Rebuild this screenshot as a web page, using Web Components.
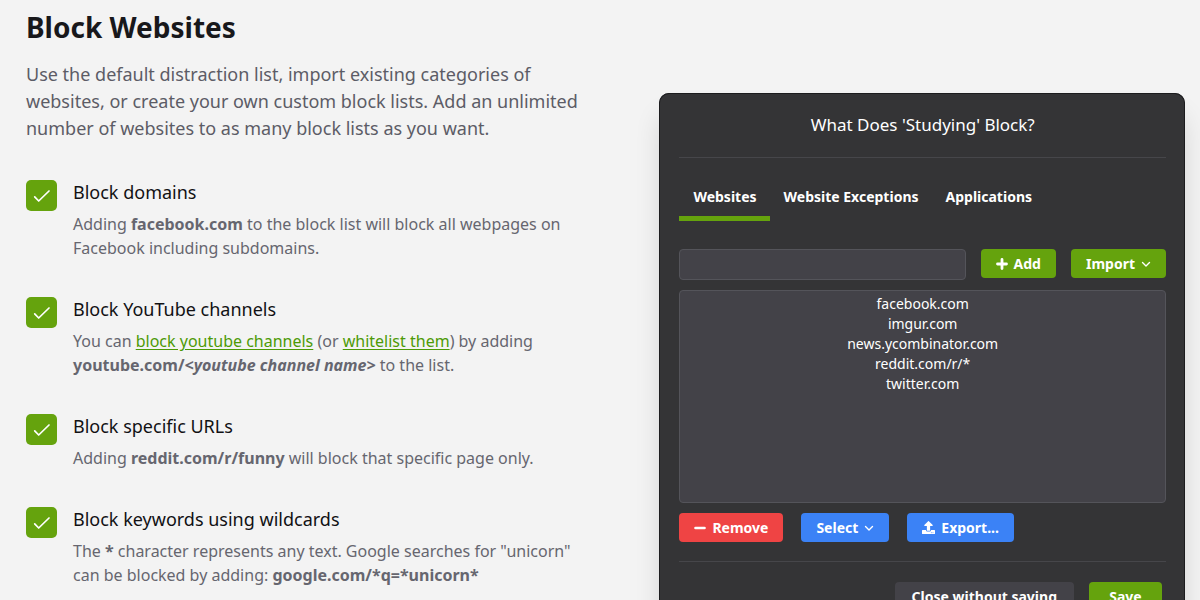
<!DOCTYPE html>
<html lang="en">
<head>
<meta charset="utf-8">
<meta name="viewport" content="width=device-width, initial-scale=1">
<title>Block Websites</title>
<style>
  body { margin: 0; background: #f3f3f3; font-family: "Noto Sans", "Open Sans", sans-serif; color: #18181b; }
</style>
</head>
<body>
<feature-section>
  <feature-intro slot="copy">
    <span slot="title">Block Websites</span>
    Use the default distraction list, import existing categories of websites, or create your own custom block lists. Add an unlimited number of websites to as many block lists as you want.
  </feature-intro>
  <feature-item slot="copy">
    <span slot="title">Block domains</span>
    Adding <b>facebook.com</b> to the block list will block all webpages on Facebook including subdomains.
  </feature-item>
  <feature-item slot="copy">
    <span slot="title">Block YouTube channels</span>
    You can <text-link href="#channels">block youtube channels</text-link> (or <text-link href="#whitelist">whitelist them</text-link>) by adding <b>youtube.com/<i>&lt;youtube channel name&gt;</i></b> to the list.
  </feature-item>
  <feature-item slot="copy">
    <span slot="title">Block specific URLs</span>
    Adding <b>reddit.com/r/funny</b> will block that specific page only.
  </feature-item>
  <feature-item slot="copy">
    <span slot="title">Block keywords using wildcards</span>
    The <b>*</b> character represents any text. Google searches for "unicorn" can be blocked by adding: <b>google.com/*q=*unicorn*</b>
  </feature-item>
  <block-dialog slot="demo"></block-dialog>
</feature-section>

<script>
const define = (name, html) => {
  const template = document.createElement('template');
  template.innerHTML = html;
  customElements.define(name, class extends HTMLElement {
    constructor() {
      super();
      this.attachShadow({ mode: 'open' }).append(template.content.cloneNode(true));
    }
    connectedCallback() {
      const link = this.shadowRoot.querySelector('a');
      if (link) link.href = this.getAttribute('href') || '#';
    }
  });
};

define('feature-section', `
<style>
  :host { display: block; }
  main { display: grid; grid-template-columns: 13fr 12fr; gap: 64px; padding: 7px 15px 24px 26px; align-items: start; }
  .demo { padding-top: 86px; }
</style>
<main>
  <div><slot name="copy"></slot></div>
  <div class="demo"><slot name="demo"></slot></div>
</main>`);

define('feature-intro', `
<style>
  :host { display: block; margin-bottom: 38px; }
  h1 { margin: 0 0 14px; font-size: 28px; line-height: 40px; font-weight: 700; }
  p { margin: 0; font-size: 18px; line-height: 27px; color: #5c5c66; }
</style>
<h1><slot name="title"></slot></h1>
<p><slot></slot></p>`);

define('feature-item', `
<style>
  :host { display: grid; grid-template-columns: 31px 1fr; column-gap: 16px; margin-bottom: 37px; }
  svg { display: block; width: 31px; height: 31px; border-radius: 5px; background: #65a30d; }
  h2 { margin: 0 0 7px; font-size: 18px; line-height: 25px; font-weight: 400; color: #111113; }
  p { margin: 0; font-size: 16px; line-height: 24px; color: #66666f; }
</style>
<svg viewBox="0 0 31 31" aria-hidden="true"><path d="M8.7 16.800l4 4.200L23 11" fill="none" stroke="#fff" stroke-width="1.700" stroke-linecap="round" stroke-linejoin="round"/></svg>
<div>
  <h2><slot name="title"></slot></h2>
  <p><slot></slot></p>
</div>`);

define('text-link', `
<style>
  :host { display: inline; }
  a { color: #4d9a06; text-decoration: underline; text-underline-offset: 2px; }
</style><a><slot></slot></a>`);

const icons = {
  plus: '<svg width="12" height="12" viewBox="0 0 12 12"><path d="M6 1.500v9M1.500 6h9" stroke="#fff" stroke-width="2.800" stroke-linecap="round"/></svg>',
  minus: '<svg width="12" height="12" viewBox="0 0 12 12"><path d="M1.500 6h9" stroke="#fff" stroke-width="2.600" stroke-linecap="round"/></svg>',
  chevron: '<svg width="10" height="10" viewBox="0 0 10 10"><path d="M1.500 3.500L5 7l3.500-3.500" fill="none" stroke="#fff" stroke-width="1.400" stroke-linecap="round" stroke-linejoin="round"/></svg>',
  upload: '<svg width="13" height="13" viewBox="0 0 512 512"><path fill="#fff" d="M296 384h-80c-13.300 0-24-10.700-24-24V192h-87.700c-17.800 0-26.700-21.500-14.100-34.100L242.300 5.700c7.500-7.500 19.800-7.500 27.300 0l152.200 152.200c12.600 12.600 3.700 34.100-14.100 34.100H320v168c0 13.300-10.700 24-24 24zm216-8v112c0 13.300-10.700 24-24 24H24c-13.300 0-24-10.700-24-24V376c0-13.300 10.700-24 24-24h136v8c0 30.900 25.100 56 56 56h80c30.900 0 56-25.100 56-56v-8h136c13.300 0 24 10.700 24 24zm-124 88c0-11-9-20-20-20s-20 9-20 20 9 20 20 20 20-9 20-20zm64 0c0-11-9-20-20-20s-20 9-20 20 9 20 20 20 20-9 20-20z"/></svg>'
};

customElements.define('ui-button', class extends HTMLElement {
  constructor() {
    super();
    const lead = icons[this.getAttribute('icon')] || '';
    const menu = this.hasAttribute('menu');
    this.attachShadow({ mode: 'open' }).innerHTML = `
<style>
  :host { display: block; flex: none; --fill: #65a30d; }
  :host([tone="danger"]) { --fill: #ef4444; }
  :host([tone="info"]) { --fill: #3b82f6; }
  :host([tone="muted"]) { --fill: #434248; }
  button { display: flex; align-items: center; justify-content: center; gap: 6px; width: 100%; height: 29px; padding: 0 15px; border: 0; border-radius: 4px; background: var(--fill); color: #fff; font: 700 14px/20px "Noto Sans", "Open Sans", sans-serif; white-space: nowrap; }
  :host([size="wide"]) button { min-width: 73px; padding: 0 17px; }
  svg { display: block; flex: none; }
</style>
<button type="button" ${menu ? 'aria-haspopup="menu"' : ''}>${lead}<slot></slot>${menu ? icons.chevron : ''}</button>`;
  }
});

define('tab-bar', `
<style>
  :host { display: flex; }
  button { margin: 0; padding: 0 13px 9px 14px; border: 0; border-bottom: 5px solid transparent; background: none; color: #fff; font: 700 14px/20px "Noto Sans", "Open Sans", sans-serif; }
  button[aria-selected="true"] { border-color: #65a30d; }
</style>
<button role="tab" type="button" aria-selected="true">Websites</button>
<button role="tab" type="button" aria-selected="false">Website Exceptions</button>
<button role="tab" type="button" aria-selected="false">Applications</button>`);

define('block-dialog', `
<style>
  :host { display: block; box-sizing: border-box; padding: 20px 19px 20px 20px; border-radius: 10px; background: #343436; color: #fff; box-shadow: inset 0 0 0 1px #1c1c1e, 0 20px 28px -4px rgba(0,0,0,.16); }
  h2 { margin: 0; padding-bottom: 20px; border-bottom: 1px solid #46464a; font-size: 17px; line-height: 24px; font-weight: 400; text-align: center; }
  tab-bar { margin: 29px 0 28px; }
  .row { display: flex; align-items: flex-start; }
  .entry { gap: 15px; }
  input { flex: 1; min-width: 0; box-sizing: border-box; height: 31px; margin: 0; padding: 0 10px; border: 1px solid #54545a; border-radius: 4px; background: #434248; color: #fff; font: 14px/20px "Noto Sans", sans-serif; }
  ul { box-sizing: border-box; min-height: 213px; margin: 10px 0; padding: 3px 10px; border: 1px solid #54545a; border-radius: 4px; background: #434248; list-style: none; text-align: center; font-size: 14px; line-height: 20px; }
  .actions { gap: 18px; padding-bottom: 19px; border-bottom: 1px solid #46464a; }
  .footer { gap: 15px; justify-content: flex-end; padding: 20px 4px 0 0; }
</style>
<h2>What Does 'Studying' Block?</h2>
<tab-bar role="tablist"></tab-bar>
<div class="row entry">
  <input type="text" aria-label="Website to block">
  <ui-button icon="plus">Add</ui-button>
  <ui-button menu>Import</ui-button>
</div>
<ul>
  <li>facebook.com</li>
  <li>imgur.com</li>
  <li>news.ycombinator.com</li>
  <li>reddit.com/r/*</li>
  <li>twitter.com</li>
</ul>
<div class="row actions">
  <ui-button tone="danger" icon="minus">Remove</ui-button>
  <ui-button tone="info" menu>Select</ui-button>
  <ui-button tone="info" icon="upload">Export...</ui-button>
</div>
<div class="row footer">
  <ui-button tone="muted" size="wide">Close without saving</ui-button>
  <ui-button size="wide">Save</ui-button>
</div>`);
</script>
</body>
</html>
